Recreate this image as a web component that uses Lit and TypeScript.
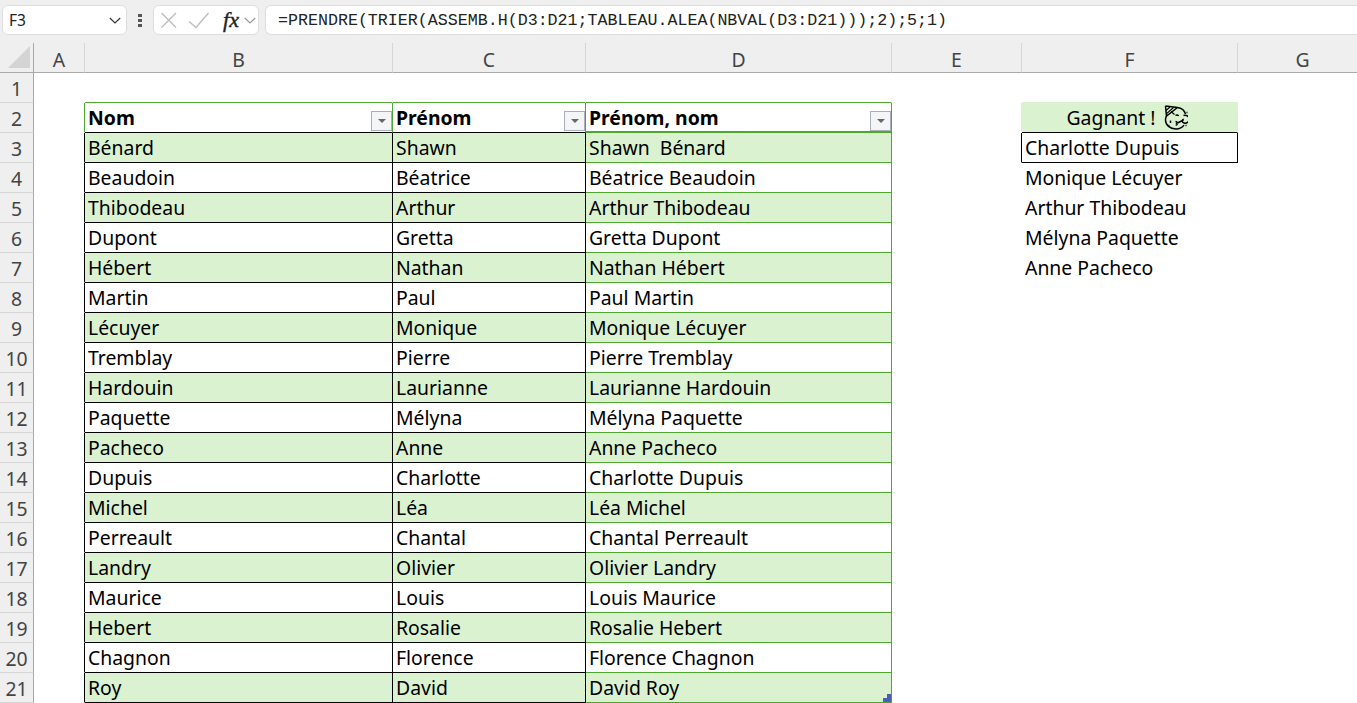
import { LitElement, html, css, svg } from "lit";
import { customElement } from "lit/decorators.js";

const ROWS: [string, string, string][] = [
  ["Bénard", "Shawn", "Shawn  Bénard"],
  ["Beaudoin", "Béatrice", "Béatrice Beaudoin"],
  ["Thibodeau", "Arthur", "Arthur Thibodeau"],
  ["Dupont", "Gretta", "Gretta Dupont"],
  ["Hébert", "Nathan", "Nathan Hébert"],
  ["Martin", "Paul", "Paul Martin"],
  ["Lécuyer", "Monique", "Monique Lécuyer"],
  ["Tremblay", "Pierre", "Pierre Tremblay"],
  ["Hardouin", "Laurianne", "Laurianne Hardouin"],
  ["Paquette", "Mélyna", "Mélyna Paquette"],
  ["Pacheco", "Anne", "Anne Pacheco"],
  ["Dupuis", "Charlotte", "Charlotte Dupuis"],
  ["Michel", "Léa", "Léa Michel"],
  ["Perreault", "Chantal", "Chantal Perreault"],
  ["Landry", "Olivier", "Olivier Landry"],
  ["Maurice", "Louis", "Louis Maurice"],
  ["Hebert", "Rosalie", "Rosalie Hebert"],
  ["Chagnon", "Florence", "Florence Chagnon"],
  ["Roy", "David", "David Roy"],
];
const WINNERS = ["Charlotte Dupuis", "Monique Lécuyer", "Arthur Thibodeau", "Mélyna Paquette", "Anne Pacheco"];
const COLS = ["A", "B", "C", "D", "E", "F", "G"];

@customElement("app-root")
export class AppRoot extends LitElement {
  static styles = css`
    :host { display: block; width: 1357px; height: 703px; overflow: hidden; background: #efefef;
      font-family: "Noto Sans", sans-serif; color: #000; }
    .bar { display: flex; align-items: flex-start; height: 43px; padding: 5px 0 0 2px; box-sizing: border-box; }
    .box { height: 30px; box-sizing: border-box; background: #fff; border: 1px solid #dedede; border-radius: 6px;
      display: flex; align-items: center; flex: none; }
    .name { width: 125px; padding: 0 5px 0 6px; justify-content: space-between; font-size: 15.5px; color: #222; }
    .dots { width: 26px; flex: none; display: flex; flex-direction: column; align-items: center; gap: 2px; padding-top: 9px; }
    .dots i { width: 4px; height: 3px; background: #555; display: block; }
    .fx { width: 106px; margin-right: 6px; }
    .fx svg { display: block; }
    .fxt { font-family: "Liberation Serif", serif; font-style: italic; font-size: 22px; line-height: 26px; color: #222; width: 26px; text-align: center; -webkit-text-stroke: 0.4px #222; }
    .formula { flex: 1; border-right: 0; border-radius: 6px 0 0 6px; padding-left: 12px; white-space: pre;
      font-family: "Liberation Mono", monospace; font-size: 16.65px; color: #222; }
    .sheet { display: grid; grid-template-columns: 34px 51px 308px 193px 306px 130px 216px 130px; grid-auto-rows: 30px; background: #fff; }
    .cell { box-sizing: border-box; border-right: 1px solid #fff; border-bottom: 1px solid #fff; background: #fff;
      font-size: 19.4px; line-height: 29px; padding-left: 3px; white-space: pre; position: relative; overflow: hidden; }
    .colh, .rowh, .corner { background: #efefef; color: #444; padding: 0; text-align: center;
      border-right: 1px solid #d6d6d6; border-bottom: 1px solid #aaa; }
    .colh { line-height: 33px; }
    .rowh { border-bottom-color: #d6d6d6; border-right-color: #a8a8a8; line-height: 31px; }
    .corner { border-right-color: #a8a8a8; display: flex; align-items: flex-end; justify-content: flex-end; padding: 0 3px 4px 0; }
    .fill { background: #daf2d0; }
    .rb-k { border-right-color: #000; } .rb-g { border-right-color: #4ea72e; } .rb-f { border-right-color: #daf2d0; }
    .bb-k { border-bottom-color: #000; } .bb-g { border-bottom-color: #4ea72e; } .bb-f { border-bottom-color: #daf2d0; }
    .bb-g2 { border-bottom-color: #4ea72e; box-shadow: inset 0 -1px 0 #4ea72e; }
    .head { font-weight: 700; display: flex; justify-content: space-between; align-items: flex-start; padding-right: 0; }
    .filter { width: 21px; height: 20px; box-sizing: border-box; margin-top: 8px; flex: none; background: #f4f5f6;
      border: 1px solid #aab0ba; display: flex; align-items: center; justify-content: center; }
    .filter i { display: block; width: 0; height: 0; border-left: 4px solid transparent; border-right: 4px solid transparent; border-top: 4px solid #666; }
    .center { text-align: center; padding: 0 5px 0 0; display: flex; align-items: center; justify-content: center; gap: 8px; }
    .handle { position: absolute; right: 0; bottom: 0; display: block; }
  `;

  chevron(w: number, h: number, color: string) {
    return html`<svg width=${w} height=${h} viewBox="0 0 12 7" fill="none" stroke=${color} stroke-width="1.2"><path d="M.8 1 6 6l5.2-5"/></svg>`;
  }

  party() {
    return svg`<svg width="24" height="25" viewBox="0 0 24 25" fill="none" stroke="#000" stroke-width="1.5">
      <path d="M2.500 11C1.700 12.500 1.500 14 1.500 15c0 5 4.500 9 10.500 9 3.500 0 6.500-1.500 8-3.800"/>
      <path d="M1.500 1 13.500 2.500C17.500 3 20.500 5.500 21.500 9"/>
      <path d="M1.500 1 2.500 11 13.500 2.500"/>
      <path d="M2 5.500 6 2M2.300 8.800 9.500 2.500M7 6.500l3.500 3" stroke-width="1.100"/>
      <path d="M6.500 15.500v2.500M11.500 10.500c1-.8 2.500-.7 3.200.4M11.500 16.500c1.300.2 2.200.9 1.200 1.800 1 .7.400 1.900-1 2"/>
      <path d="M13.500 18 19.500 15M19.500 10.500a4 4 0 1 1 .5 7.500c-2.300-.5-2.300-3.600-.2-3.800"/>
      <path d="M4.500 20.500h1M21.500 20.500h1.500M22.500 7.500h1" stroke-dasharray="1 1"/>
    </svg>`;
  }

  cell(text: unknown, cls: string) {
    return html`<div class="cell ${cls}">${text}</div>`;
  }

  renderRow(n: number) {
    const i = n - 3;
    const data = i >= 0 ? ROWS[i] : null;
    const striped = data && n % 2 === 1;
    const fillCls = striped ? "fill" : "";
    const win = i >= 0 && i < WINNERS.length ? WINNERS[i] : "";

    let a = "", b = "", c = "", d = "", e = "", f = "";
    if (n === 1) {
      b = "bb-g"; c = "bb-g"; d = "bb-g"; f = "bb-f";
    }
    if (n === 2) {
      a = "rb-g"; b = "rb-g bb-k"; c = "rb-g bb-k"; d = "rb-g bb-g2"; e = "rb-f"; f = "fill bb-k rb-f";
    }
    if (data) {
      a = "rb-k";
      b = `rb-k bb-k ${fillCls}`;
      c = `rb-k bb-k ${fillCls}`;
      d = `rb-g bb-g ${fillCls}`;
      e = n === 3 ? "rb-k" : "";
      f = n === 3 ? "rb-k bb-k" : "";
    }
    const filter = html`<span class="filter"><i></i></span>`;
    const handle = svg`<svg class="handle" width="8" height="8" viewBox="0 0 8 8"><path fill="#4a5fb5" d="M4 0h4v8H0V4h4z"/></svg>`;

    return html`
      <div class="cell rowh">${n}</div>
      ${this.cell("", a)}
      ${n === 2
        ? html`<div class="cell head ${b}">Nom${filter}</div>
            <div class="cell head ${c}">Prénom${filter}</div>
            <div class="cell head ${d}">Prénom, nom${filter}</div>`
        : html`${this.cell(data ? data[0] : "", b)}${this.cell(data ? data[1] : "", c)}
            <div class="cell ${d}">${data ? data[2] : ""}${n === 21 ? handle : ""}</div>`}
      ${this.cell("", e)}
      ${n === 2
        ? html`<div class="cell center ${f}"><span>Gagnant !</span>${this.party()}</div>`
        : this.cell(win, f)}
      ${this.cell("", "")}
    `;
  }

  render() {
    const rows = Array.from({ length: 21 }, (_, k) => k + 1);
    return html`
      <div class="bar">
        <div class="box name"><span>F3</span>${this.chevron(12, 7, "#333")}</div>
        <div class="dots"><i></i><i></i><i></i></div>
        <div class="box fx">
          <svg width="64" height="22" viewBox="0 0 64 22" fill="none" stroke="#bdbdbd" stroke-width="1.4">
            <path d="M7.500 4 22 18.500M22 4 7.500 18.500"/>
            <path d="M35 12.500 42 18.500 54.500 4"/>
          </svg>
          <span class="fxt">fx</span>
          ${this.chevron(12, 7, "#999")}
        </div>
        <div class="box formula">=PRENDRE(TRIER(ASSEMB.H(D3:D21;TABLEAU.ALEA(NBVAL(D3:D21)));2);5;1)</div>
      </div>
      <div class="sheet">
        <div class="cell corner">
          <svg width="22" height="22" viewBox="0 0 22 22"><path fill="#d4d4d4" d="M22 0v22H0z"/></svg>
        </div>
        ${COLS.map((c) => html`<div class="cell colh">${c}</div>`)}
        ${rows.map((n) => this.renderRow(n))}
      </div>
    `;
  }
}
